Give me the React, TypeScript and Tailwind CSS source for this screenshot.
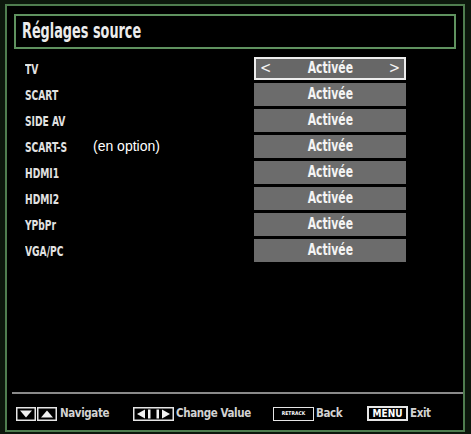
import React from "react";

const sources = [
  { name: "TV", selected: true },
  { name: "SCART" },
  { name: "SIDE AV" },
  { name: "SCART-S", note: "(en option)" },
  { name: "HDMI1" },
  { name: "HDMI2" },
  { name: "YPbPr" },
  { name: "VGA/PC" },
];

const condensed = "font-['DejaVu_Sans_Condensed','Liberation_Sans',sans-serif]";

function NavKeys() {
  return (
    <svg width="41" height="14" viewBox="0 0 41 14" className="shrink-0">
      <rect x="0.75" y="0.75" width="18.5" height="12.5" fill="none" stroke="#e6e6e6" strokeWidth="1.5" />
      <polygon points="4,3.5 16,3.5 10,10.5" fill="#f2f2f2" />
      <rect x="21.75" y="0.75" width="18.5" height="12.5" fill="none" stroke="#e6e6e6" strokeWidth="1.5" />
      <polygon points="25,10.5 37,10.5 31,3.5" fill="#f2f2f2" />
    </svg>
  );
}

function ArrowKeys() {
  return (
    <svg width="41" height="14" viewBox="0 0 41 14" className="shrink-0">
      <rect x="0.75" y="0.75" width="39.5" height="12.5" fill="none" stroke="#e6e6e6" strokeWidth="1.5" />
      <polygon points="12,2.5 12,11.5 4,7" fill="#f2f2f2" />
      <rect x="15" y="2.5" width="2.5" height="9" fill="#f2f2f2" />
      <rect x="23.5" y="2.5" width="2.5" height="9" fill="#f2f2f2" />
      <polygon points="29,2.5 29,11.5 37,7" fill="#f2f2f2" />
    </svg>
  );
}

function Squeezed({ children, className = "" }: { children: React.ReactNode; className?: string }) {
  return <span className={`inline-block scale-x-[0.8] ${className}`}>{children}</span>;
}

export default function App() {
  return (
    <div className="w-[471px] h-[434px] bg-[#0c170c] pt-[4px] pl-[5px]">
      <div className={`w-[460px] h-[428px] border-2 border-[#4f7d4f] bg-black flex flex-col ${condensed}`}>
        {/* header */}
        <div className="mt-[8px] mx-[7px] h-[35px] border-2 border-[#5f925f] flex items-center pl-[6px]">
          <span className="inline-block origin-left scale-x-[0.68] text-[21px] font-bold text-[#ececec] whitespace-nowrap">Réglages source</span>
        </div>

        {/* source list */}
        <div className="mt-[8px] flex flex-col gap-[3px]">
          {sources.map((s) => (
            <div key={s.name} className="h-[23px] flex items-center">
              <span className="pl-[18px] w-[86px] whitespace-nowrap">
                <span className="inline-block origin-left scale-x-[0.7] text-[14.5px] font-bold text-[#e2e2e2]">{s.name}</span>
              </span>
              <span className="w-[161px] text-[14px] text-white font-['Liberation_Sans',sans-serif]">{s.note ?? ""}</span>
              {s.selected ? (
                <div className="w-[152px] h-[23px] bg-[#676767] border-2 border-[#ededed] flex items-center justify-between px-[4px] text-[#f4f4f4]">
                  <span className="text-[15px] leading-none">&lt;</span>
                  <Squeezed className="text-[15px] font-bold">Activée</Squeezed>
                  <span className="text-[15px] leading-none">&gt;</span>
                </div>
              ) : (
                <div className="w-[152px] h-[23px] bg-[#6c6c6c] flex items-center justify-center text-[#f4f4f4]">
                  <Squeezed className="text-[15px] font-bold">Activée</Squeezed>
                </div>
              )}
            </div>
          ))}
        </div>

        {/* key help */}
        <div className="mt-auto">
          <div className="ml-[5px] h-[2px] bg-[#8a8a8a]" />
          <div className="h-[36px] pt-[3px] flex items-center text-[11.5px] font-bold text-[#d2d2d2] tracking-[-0.4px]">
            <div className="ml-[9px] w-[117px] flex items-center gap-[3px]">
              <NavKeys />
              <span>Navigate</span>
            </div>
            <div className="w-[140px] flex items-center gap-[2px]">
              <ArrowKeys />
              <span>Change Value</span>
            </div>
            <div className="w-[94px] flex items-center gap-[2px]">
              <span className="w-[41px] h-[14px] border-[1.5px] border-[#e6e6e6] flex items-center justify-center text-[5px] font-bold text-white tracking-normal leading-none">
                RETRACK
              </span>
              <span>Back</span>
            </div>
            <div className="flex items-center gap-[2px]">
              <span className="w-[41px] h-[15px] border-2 border-[#e6e6e6] flex items-center justify-center text-[10px] font-bold text-white tracking-normal leading-none">
                MENU
              </span>
              <span>Exit</span>
            </div>
          </div>
        </div>
      </div>
    </div>
  );
}
